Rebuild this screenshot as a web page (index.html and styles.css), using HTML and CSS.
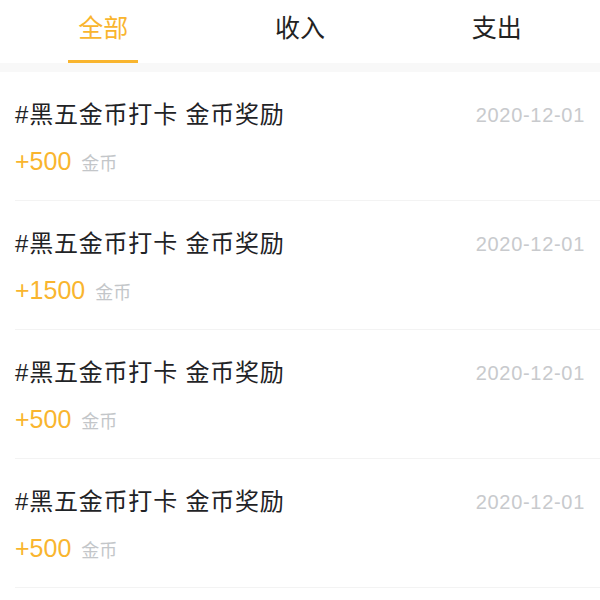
FILE: index.html
```html
<!DOCTYPE HTML>
<html>
<head>
<meta http-equiv="Content-Type" content="text/html; charset=utf-8">
<title>金币明细</title>
<link rel="stylesheet" href="styles.css">
</head>
<body>
<div class="tabs">
  <div class="tab on"><span class="tab-txt">全部</span><i class="bar"></i></div>
  <div class="tab"><span class="tab-txt">收入</span><i class="bar"></i></div>
  <div class="tab"><span class="tab-txt">支出</span><i class="bar"></i></div>
</div>
<div class="gap"></div>
<ul class="list">
  <li class="item">
    <div class="top"><span class="name">#黑五金币打卡 金币奖励</span><span class="date">2020-12-01</span></div>
    <div class="amt"><span class="num">+500</span><span class="unit">金币</span></div>
  </li>
  <li class="item">
    <div class="top"><span class="name">#黑五金币打卡 金币奖励</span><span class="date">2020-12-01</span></div>
    <div class="amt"><span class="num">+1500</span><span class="unit">金币</span></div>
  </li>
  <li class="item">
    <div class="top"><span class="name">#黑五金币打卡 金币奖励</span><span class="date">2020-12-01</span></div>
    <div class="amt"><span class="num">+500</span><span class="unit">金币</span></div>
  </li>
  <li class="item">
    <div class="top"><span class="name">#黑五金币打卡 金币奖励</span><span class="date">2020-12-01</span></div>
    <div class="amt"><span class="num">+500</span><span class="unit">金币</span></div>
  </li>
</ul>
</body>
</html>
```

FILE: styles.css
```css
body {margin:0; background:#fff; font-family:"Liberation Sans","Noto Sans CJK SC",sans-serif; color:#1f2326;}
.tabs {display:flex; height:63px; padding:0 5px;}
.tab {flex:1; display:flex; flex-direction:column; align-items:center; padding-top:11px; box-sizing:border-box;}
.tab-txt {font-size:25px; line-height:34px; color:#222;}
.tab .bar {display:block; width:70px; height:3px; margin-top:15px; background:transparent;}
.tab.on .tab-txt {color:#f9b52e;}
.tab.on .bar {background:#f9b52e;}
.gap {height:9px; background:#f8f8f8;}
.list {list-style:none; margin:0; padding:0;}
.item {margin-left:15px; padding:28px 15px 24px 0; border-bottom:1px solid #f3f3f3;}
.top {display:flex; justify-content:space-between; align-items:center; height:30px;}
.name {font-size:24px; line-height:30px; letter-spacing:0.8px;}
.date {font-size:20px; letter-spacing:0.7px; color:#c8cacd;}
.amt {margin-top:16px; height:30px; line-height:30px; display:flex; align-items:baseline;}
.num {font-size:25px; color:#f9b52e;}
.unit {font-size:18px; color:#c3c6c9; margin-left:10px;}
```
